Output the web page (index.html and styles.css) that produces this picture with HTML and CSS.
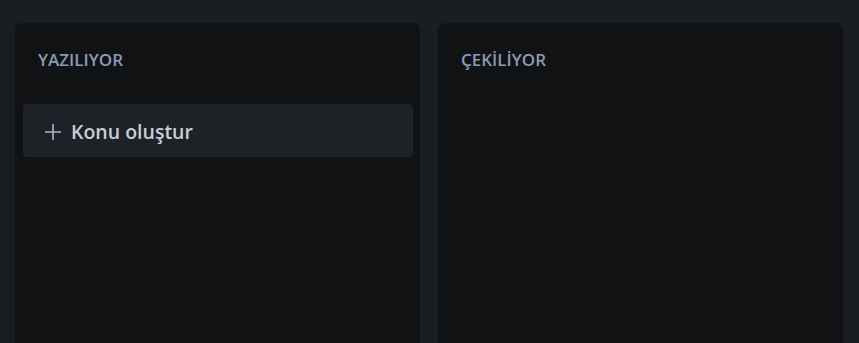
FILE: index.html
```html
<!DOCTYPE html>
<html lang="tr">
<head>
  <meta charset="UTF-8">
  <meta name="viewport" content="width=device-width, initial-scale=1.0">
  <title>Pano</title>
  <link rel="stylesheet" href="styles.css">
</head>
<body>
  <div class="board">
    <div class="column">
      <h3 class="column-title">YAZILIYOR</h3>
      <button class="add-card">
        <svg class="plus" width="18" height="18" viewBox="0 0 18 18">
          <path d="M9 1v16M1 9h16" stroke="currentColor" stroke-width="1.6" fill="none"/>
        </svg>
        <span>Konu oluştur</span>
      </button>
    </div>
    <div class="column">
      <h3 class="column-title">ÇEKİLİYOR</h3>
    </div>
  </div>
</body>
</html>
```

FILE: styles.css
```css
body {
  margin: 0;
  background-color: #1a1d21;
  font-family: 'Open Sans', 'Noto Sans', sans-serif;
  height: 343px;
  overflow: hidden;
}
.board {
  display: flex;
  gap: 18px;
  padding: 23px 16px 0 15px;
}
.column {
  flex: 1;
  height: 320px;
  background-color: #111214;
  border-radius: 8px 8px 0 0;
  padding: 0 7px 0 8px;
  box-sizing: border-box;
}
.column-title {
  margin: 0;
  height: 81px;
  padding: 25px 0 0 15px;
  box-sizing: border-box;
  font-size: 17px;
  font-weight: 600;
  color: #8a9cb6;
}
.add-card {
  display: flex;
  align-items: center;
  gap: 9px;
  width: 100%;
  height: 53px;
  padding: 2px 0 0 21px;
  border: none;
  border-radius: 4px;
  background-color: #1e2125;
  color: #c9ced6;
  font-family: inherit;
  font-size: 19.5px;
  font-weight: 600;
  cursor: pointer;
}
.plus {
  color: #aeb5bf;
}
```
